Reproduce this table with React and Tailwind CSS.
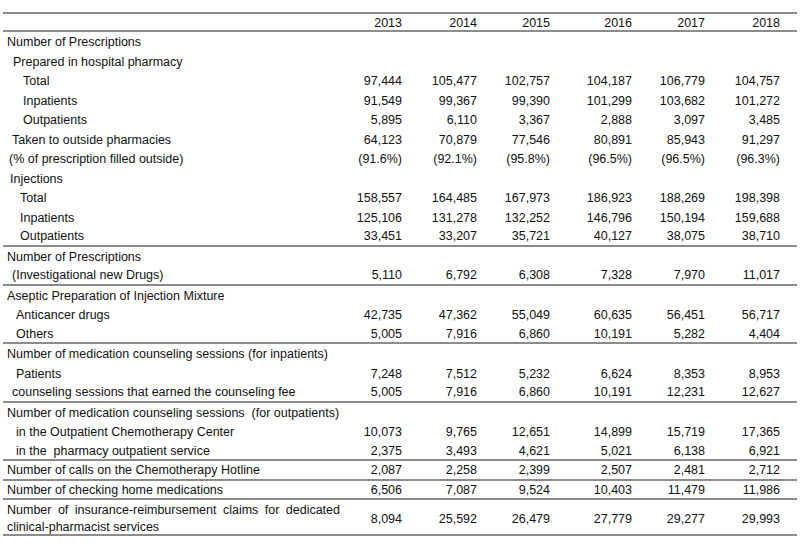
import React from "react";

const groups = [
  [
    { label: "Number of Prescriptions", indent: "pl-[4px]" },
    { label: "Prepared in hospital pharmacy", indent: "pl-[10px]" },
    { label: "Total", indent: "pl-[20px]", v: ["97,444", "105,477", "102,757", "104,187", "106,779", "104,757"] },
    { label: "Inpatients", indent: "pl-[20px]", v: ["91,549", "99,367", "99,390", "101,299", "103,682", "101,272"] },
    { label: "Outpatients", indent: "pl-[20px]", v: ["5,895", "6,110", "3,367", "2,888", "3,097", "3,485"] },
    { label: "Taken to outside pharmacies", indent: "pl-[9px]", v: ["64,123", "70,879", "77,546", "80,891", "85,943", "91,297"] },
    { label: "(% of prescription filled outside)", indent: "pl-[6px]", v: ["(91.6%)", "(92.1%)", "(95.8%)", "(96.5%)", "(96.5%)", "(96.3%)"] },
    { label: "Injections", indent: "pl-[7px]" },
    { label: "Total", indent: "pl-[17px]", v: ["158,557", "164,485", "167,973", "186,923", "188,269", "198,398"] },
    { label: "Inpatients", indent: "pl-[17px]", v: ["125,106", "131,278", "132,252", "146,796", "150,194", "159,688"] },
    { label: "Outpatients", indent: "pl-[17px]", v: ["33,451", "33,207", "35,721", "40,127", "38,075", "38,710"] },
  ],
  [
    { label: "Number of Prescriptions", indent: "pl-[4px]" },
    { label: "(Investigational new Drugs)", indent: "pl-[9px]", v: ["5,110", "6,792", "6,308", "7,328", "7,970", "11,017"] },
  ],
  [
    { label: "Aseptic Preparation of Injection Mixture", indent: "pl-[4px]" },
    { label: "Anticancer drugs", indent: "pl-[13px]", v: ["42,735", "47,362", "55,049", "60,635", "56,451", "56,717"] },
    { label: "Others", indent: "pl-[13px]", v: ["5,005", "7,916", "6,860", "10,191", "5,282", "4,404"] },
  ],
  [
    { label: "Number of medication counseling sessions (for inpatients)", indent: "pl-[4px]" },
    { label: "Patients", indent: "pl-[13px]", v: ["7,248", "7,512", "5,232", "6,624", "8,353", "8,953"] },
    { label: "counseling sessions that earned the counseling fee", indent: "pl-[9px]", v: ["5,005", "7,916", "6,860", "10,191", "12,231", "12,627"] },
  ],
  [
    { label: "Number of medication counseling sessions\u00a0 (for outpatients)", indent: "pl-[4px]" },
    { label: "in the Outpatient Chemotherapy Center", indent: "pl-[13px]", v: ["10,073", "9,765", "12,651", "14,899", "15,719", "17,365"] },
    { label: "in the\u00a0 pharmacy outpatient service", indent: "pl-[13px]", v: ["2,375", "3,493", "4,621", "5,021", "6,138", "6,921"] },
  ],
  [
    { label: "Number of calls on the Chemotherapy Hotline", indent: "pl-[4px]", v: ["2,087", "2,258", "2,399", "2,507", "2,481", "2,712"] },
  ],
  [
    { label: "Number of checking home medications", indent: "pl-[4px]", v: ["6,506", "7,087", "9,524", "10,403", "11,479", "11,986"] },
  ],
];

const years = ["2013", "2014", "2015", "2016", "2017", "2018"];
const cols = "grid grid-cols-[337px_62px_75px_73px_82px_73px_75px_17px] items-center pt-[2px]";

const Row = ({ r, last }) => (
  <div className={`${cols} h-[19.5px] ${last ? "border-b-2 border-[#8c8c8c]" : ""}`}>
    <div className={`${r.indent} whitespace-pre`}>{r.label}</div>
    {years.map((y, i) => (
      <div key={y} className="text-right">{r.v ? r.v[i] : ""}</div>
    ))}
    <div />
  </div>
);

const App = () => {
  return (
    <div className="w-[800px] h-[550px] bg-white text-[#111] text-[12.5px] leading-[15px] font-['Liberation_Sans',Arial,sans-serif] overflow-hidden">
      <div className="ml-[3px] mt-[12px] w-[794px]">
        {/* Header */}
        <div className={`${cols} h-[20px] border-t-2 border-b-2 border-[#8c8c8c]`}>
          <div />
          {years.map((y) => (
            <div key={y} className="text-right">{y}</div>
          ))}
          <div />
        </div>

        {groups.map((g, gi) => (
          <div key={gi}>
            {g.map((r, ri) => (
              <Row key={ri} r={r} last={ri === g.length - 1} />
            ))}
          </div>
        ))}

        {/* Two-line row */}
        <div className={`${cols} h-[36px] border-b-2 border-[#8c8c8c]`}>
          <div className="pl-[4px] leading-[17px]">
            <div className="text-justify [text-align-last:justify]">
              Number of insurance-reimbursement claims for dedicated
            </div>
            <div>clinical-pharmacist services</div>
          </div>
          {["8,094", "25,592", "26,479", "27,779", "29,277", "29,993"].map((v) => (
            <div key={v} className="text-right">{v}</div>
          ))}
          <div />
        </div>
      </div>
    </div>
  );
};

export default App;
